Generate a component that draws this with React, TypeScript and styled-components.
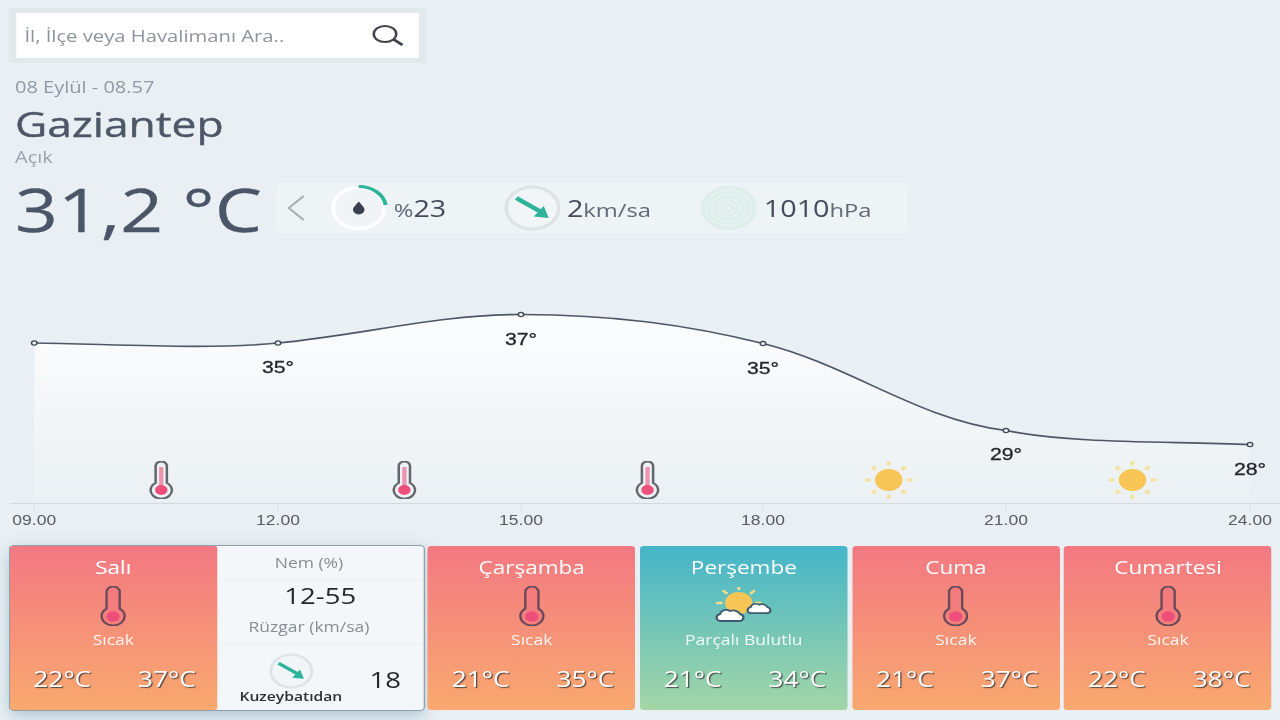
import styled, { createGlobalStyle } from "styled-components";

const GlobalStyle = createGlobalStyle`
  html, body {
    margin: 0;
    width: 1280px;
    height: 720px;
    overflow: hidden;
    background: #e9eff3;
  }
`;

// the reference is a 1024 wide page pulled out to 1280, so lay out at 1024 and stretch
const Stage = styled.div`
  width: 1024px;
  height: 720px;
  transform: scaleX(1.25);
  transform-origin: left top;
  filter: blur(0.5px);
  font-family: "Open Sans", sans-serif;
  color: #4a5568;
`;

const SearchWrap = styled.div`
  margin: 8px 0 0 6.5px;
  width: 334px;
  height: 55px;
  box-sizing: border-box;
  padding: 5px 6px;
  background: #e2e9ed;
`;

const SearchBox = styled.div`
  height: 45px;
  background: #fff;
  display: flex;
  align-items: center;
  justify-content: space-between;
  padding: 0 12px 0 7px;
  font-size: 16.2px;
  color: #8d949c;
`;

const Info = styled.div`
  padding-left: 12px;
`;

const DateLine = styled.div`
  font-size: 16px;
  line-height: 18px;
  margin-top: 15px;
  color: #8f99a3;
`;

const City = styled.div`
  font-size: 35.5px;
  line-height: 46px;
  margin-top: 4px;
  color: #4d5767;
  -webkit-text-stroke: 0.4px #4d5767;
`;

const Condition = styled.div`
  font-size: 16px;
  line-height: 18px;
  margin-top: 2px;
  color: #9aa3ac;
`;

const TempRow = styled.div`
  display: flex;
  align-items: center;
  height: 56px;
  margin-top: 15px;
`;

const BigTemp = styled.div`
  width: 209px;
  font-size: 60px;
  line-height: 56px;
  white-space: nowrap;
  color: #4a5568;
  -webkit-text-stroke: 0.3px #4a5568;
`;

const MetricPill = styled.div`
  width: 505px;
  height: 52px;
  border-radius: 6px;
  background: #eef3f6;
  display: flex;
  align-items: center;
  margin-top: -3px;
`;

const Chevron = styled.div`
  width: 43px;
  padding-left: 8px;
  box-sizing: border-box;
  display: flex;
`;

const Metric = styled.div<{ $w: number }>`
  width: ${(p) => p.$w}px;
  display: flex;
  align-items: center;
  gap: 5px;
`;

const Value = styled.span`
  font-size: 23px;
  color: #434c5a;
  white-space: nowrap;
`;

const Unit = styled.span`
  font-size: 19px;
  color: #5f6977;
`;

const ChartSvg = styled.svg`
  display: block;
  width: 1024px;
  height: 265px;
  margin-top: 33px;
`;

const AxisLabel = styled.text`
  font-family: "Liberation Sans", sans-serif;
  font-size: 14px;
  fill: #565c63;
  text-anchor: middle;
`;

const PointLabel = styled.text`
  font-family: "Liberation Sans", sans-serif;
  font-size: 17px;
  fill: #24272b;
  stroke: #24272b;
  stroke-width: 0.3px;
  text-anchor: middle;
`;

const DayRow = styled.div`
  display: flex;
  gap: 3.7px;
  margin: 11px 0 0 7.7px;
  height: 164px;
`;

const Expanded = styled.div`
  display: flex;
  border-radius: 3px;
  outline: 1px solid #8fa0a8;
  box-shadow: 0 5px 14px rgba(90, 140, 170, 0.45);
`;

const Card = styled.div<{ $kind: "hot" | "cloudy" }>`
  width: 166px;
  box-sizing: border-box;
  border-radius: 3px;
  display: flex;
  flex-direction: column;
  align-items: center;
  padding-top: 9px;
  color: #fff;
  background: ${(p) =>
    p.$kind === "hot"
      ? "linear-gradient(180deg, #f27882 0%, #f9a96f 100%)"
      : "linear-gradient(180deg, #44b5c9 0%, #a4d6a6 100%)"};
`;

const DayName = styled.div`
  font-size: 18px;
  line-height: 24px;
`;

const IconSlot = styled.div`
  height: 44px;
  margin-top: 5px;
  display: flex;
  align-items: center;
  justify-content: center;
`;

const Status = styled.div`
  font-size: 14px;
  line-height: 18px;
  margin-top: 3px;
  opacity: 0.9;
`;

const Temps = styled.div`
  align-self: stretch;
  display: flex;
  justify-content: space-between;
  padding: 0 17px 0 19px;
  margin-top: 16px;
  font-size: 21px;
  line-height: 28px;
  text-shadow: 1px 1px 1px rgba(50, 50, 50, 0.85);
`;

const Detail = styled.div`
  width: 165px;
  box-sizing: border-box;
  background: #f3f7f9;
  border-radius: 0 3px 3px 0;
  display: flex;
  flex-direction: column;
`;

const DetailLabel = styled.div<{ $h: number }>`
  height: ${(p) => p.$h}px;
  padding-right: 18px;
  display: flex;
  align-items: center;
  justify-content: center;
  font-size: 14px;
  color: #858d95;
  border-bottom: 1px solid #ebeff2;
  box-sizing: border-box;
`;

const DetailValue = styled.div`
  height: 30px;
  display: flex;
  align-items: center;
  justify-content: center;
  font-size: 22px;
  color: #24282d;
`;

const WindRow = styled.div`
  flex: 1;
  display: flex;
  align-items: flex-end;
  padding: 0 0 6px 18px;
`;

const WindDirection = styled.div`
  display: flex;
  flex-direction: column;
  align-items: center;
  font-size: 12.5px;
  font-weight: 600;
  line-height: 15px;
  color: #2b3036;
  width: 82px;
  margin-right: 22px;
`;

const WindSpeed = styled.div`
  font-size: 22px;
  line-height: 28px;
  margin-bottom: 11px;
  color: #24282d;
`;

const Thermometer = () => (
  <svg width="21" height="40" viewBox="0 0 20 38">
    <path
      d="M5 5.500a5 5 0 0 1 10 0V21.500a8.800 8.800 0 1 1-10 0Z"
      fill="rgba(240,100,125,0.35)"
      stroke="#6a4a58"
      strokeWidth="1.800"
    />
    <circle cx="10" cy="29" r="5" fill="#ee4f7a" />
  </svg>
);

const sunRays = [0, 45, 90, 135, 180, 225, 270, 315];

const ChartSun = ({ x, y }: { x: number; y: number }) => (
  <g transform={`translate(${x} ${y})`}>
    {sunRays.map((a) => (
      <line key={a} x1="0" y1="-14.500" x2="0" y2="-19" stroke="#f4e2a4" strokeWidth="3.200" transform={`rotate(${a})`} />
    ))}
    <circle r="11" fill="#f7c655" />
  </g>
);

const cloud = "M4 12a3.600 3.600 0 0 1 0-7a5 5 0 0 1 8-3a6 6 0 0 1 8 3a3.600 3.600 0 0 1 0 7Z";

const PartlyCloudy = () => (
  <svg width="50" height="38" viewBox="0 0 50 38">
    <g transform="translate(21 16)">
      {[-90, -45, 0, 45, 90].map((a) => (
        <line key={a} x1="0" y1="-13" x2="0" y2="-18" stroke="#f4dc8c" strokeWidth="2.400" transform={`rotate(${a})`} />
      ))}
      <circle r="11" fill="#f7c655" />
    </g>
    <path d={cloud} transform="translate(2 22)" fill="#fff" stroke="#3f5a70" strokeWidth="1.800" />
    <path d={cloud} transform="translate(27 16) scale(.85)" fill="#fff" stroke="#3f5a70" strokeWidth="2" />
  </svg>
);

const WindDial = ({ size = 46 }: { size?: number }) => (
  <svg width={size} height={size} viewBox="0 0 46 46">
    <circle cx="23" cy="23" r="21" fill="#f1f5f7" stroke="#dde3e6" strokeWidth="3" />
    <path d="M10 13L30 27" stroke="#2fb39b" strokeWidth="4" />
    <path d="M24 31.500L36 33L32 21Z" fill="#2fb39b" />
  </svg>
);

const HumidityDial = () => (
  <svg width="46" height="46" viewBox="0 0 46 46" style={{ overflow: "visible" }}>
    <circle cx="23" cy="23" r="20.500" fill="#f0f4f7" stroke="#fbfdfe" strokeWidth="3.400" />
    <path d="M23 1.500A21.500 21.500 0 0 1 44.500 20" fill="none" stroke="#2fb39b" strokeWidth="3.200" />
    <path d="M23 16.500c2.200 3.400 4.600 5.600 4.600 8.300a4.600 4.600 0 0 1-9.200 0c0-2.700 2.400-4.900 4.600-8.300Z" fill="#36404f" />
  </svg>
);

const PressureDial = () => (
  <svg width="46" height="46" viewBox="0 0 46 46">
    <circle cx="23" cy="23" r="22.500" fill="#e0eeeb" />
    {[18, 13.500, 9, 5].map((r) => (
      <circle key={r} cx="23" cy="23" r={r} fill="none" stroke="#e9f3f1" strokeWidth="1" />
    ))}
    <circle cx="23" cy="23" r="1.500" fill="#f3f9f8" />
  </svg>
);

const points = [
  { x: 27.4, y: 343, time: "09.00" },
  { x: 222.4, y: 343, time: "12.00", label: "35°", ly: 373 },
  { x: 416.8, y: 314.5, time: "15.00", label: "37°", ly: 345 },
  { x: 610.4, y: 343.5, time: "18.00", label: "35°", ly: 374 },
  { x: 804.8, y: 430.5, time: "21.00", label: "29°", ly: 460 },
  { x: 1000, y: 444.5, time: "24.00", label: "28°", ly: 475 },
];

const curve =
  "M27.4 343C90 344 165 350 222.400 343C290 335 350 314.500 416.800 314.500C490 314.500 550 325 610.400 343.500C680 365 735 420 804.800 430.500C860 444 930 441 1000 444.500";

const TempChart = () => (
  <ChartSvg viewBox="0 270 1024 265">
    <defs>
      <linearGradient id="area" x1="0" y1="0" x2="0" y2="1">
        <stop offset="0" stopColor="#ffffff" stopOpacity="0.85" />
        <stop offset="1" stopColor="#ffffff" stopOpacity="0.1" />
      </linearGradient>
    </defs>
    <path d={`${curve}V503H27.400Z`} fill="url(#area)" />
    <path d={curve} fill="none" stroke="#4d5767" strokeWidth="1.600" />
    <line x1="8" y1="503.500" x2="1024" y2="503.500" stroke="#d3dade" />
    {points.map((p) => (
      <g key={p.time}>
        <line x1={p.x} y1="503" x2={p.x} y2="511" stroke="#dde3e7" />
        <circle cx={p.x} cy={p.y} r="2.200" fill="#eef2f5" stroke="#3f4854" strokeWidth="1.200" />
        {p.label && <PointLabel x={p.x} y={p.ly}>{p.label}</PointLabel>}
        <AxisLabel x={p.x} y="525">{p.time}</AxisLabel>
      </g>
    ))}
    {[129, 323.500, 518].map((x) => (
      <svg key={x} x={x - 10} y="461" width="20" height="38" viewBox="0 0 20 38">
        <path d="M5.500 5a4.500 4.500 0 0 1 9 0V22a8.500 8.500 0 1 1-9 0Z" fill="#eef1f4" stroke="#62666e" strokeWidth="2" />
        <line x1="10" y1="6" x2="10" y2="26" stroke="#ec94ae" strokeWidth="3.400" />
        <circle cx="10" cy="29" r="5" fill="#ee4f7a" />
      </svg>
    ))}
    <ChartSun x={711} y={480} />
    <ChartSun x={906} y={480} />
  </ChartSvg>
);

type Day = {
  name: string;
  status: string;
  low: string;
  high: string;
  kind: "hot" | "cloudy";
};

const days: Day[] = [
  { name: "Çarşamba", status: "Sıcak", low: "21°C", high: "35°C", kind: "hot" },
  { name: "Perşembe", status: "Parçalı Bulutlu", low: "21°C", high: "34°C", kind: "cloudy" },
  { name: "Cuma", status: "Sıcak", low: "21°C", high: "37°C", kind: "hot" },
  { name: "Cumartesi", status: "Sıcak", low: "22°C", high: "38°C", kind: "hot" },
];

const DayCard = ({ day }: { day: Day }) => (
  <Card $kind={day.kind}>
    <DayName>{day.name}</DayName>
    <IconSlot>{day.kind === "hot" ? <Thermometer /> : <PartlyCloudy />}</IconSlot>
    <Status>{day.status}</Status>
    <Temps>
      <span>{day.low}</span>
      <span>{day.high}</span>
    </Temps>
  </Card>
);

const App = () => {
  return (
    <>
      <GlobalStyle />
      <Stage>
        <SearchWrap>
          <SearchBox>
            <span>İl, İlçe veya Havalimanı Ara..</span>
            <svg width="26" height="24" viewBox="0 0 26 24" fill="none" stroke="#3f444b">
              <ellipse cx="11" cy="10" rx="9" ry="8" strokeWidth="2" />
              <path d="M18 15.500L25 21" strokeWidth="2.600" />
            </svg>
          </SearchBox>
        </SearchWrap>
        <Info>
          <DateLine>08 Eylül - 08.57</DateLine>
          <City>Gaziantep</City>
          <Condition>Açık</Condition>
          <TempRow>
            <BigTemp>31,2 °C</BigTemp>
            <MetricPill>
              <Chevron>
                <svg width="16" height="28" viewBox="0 0 16 28" fill="none" stroke="#a9b0b7" strokeWidth="1.800">
                  <path d="M14 2L2 14L14 26" />
                </svg>
              </Chevron>
              <Metric $w={138.500}>
                <HumidityDial />
                <Value>
                  <Unit>%</Unit>23
                </Value>
              </Metric>
              <Metric $w={157.500}>
                <WindDial />
                <Value>
                  2<Unit>km/sa</Unit>
                </Value>
              </Metric>
              <Metric $w={160}>
                <PressureDial />
                <Value>
                  1010<Unit>hPa</Unit>
                </Value>
              </Metric>
            </MetricPill>
          </TempRow>
        </Info>
        <TempChart />
        <DayRow>
          <Expanded>
            <Card $kind="hot">
              <DayName>Salı</DayName>
              <IconSlot>
                <Thermometer />
              </IconSlot>
              <Status>Sıcak</Status>
              <Temps>
                <span>22°C</span>
                <span>37°C</span>
              </Temps>
            </Card>
            <Detail>
              <DetailLabel $h={34}>Nem (%)</DetailLabel>
              <DetailValue>12-55</DetailValue>
              <DetailLabel $h={34}>Rüzgar (km/sa)</DetailLabel>
              <WindRow>
                <WindDirection>
                  <WindDial size={36} />
                  Kuzeybatıdan
                </WindDirection>
                <WindSpeed>18</WindSpeed>
              </WindRow>
            </Detail>
          </Expanded>
          {days.map((d) => (
            <DayCard key={d.name} day={d} />
          ))}
        </DayRow>
      </Stage>
    </>
  );
};

export default App;
